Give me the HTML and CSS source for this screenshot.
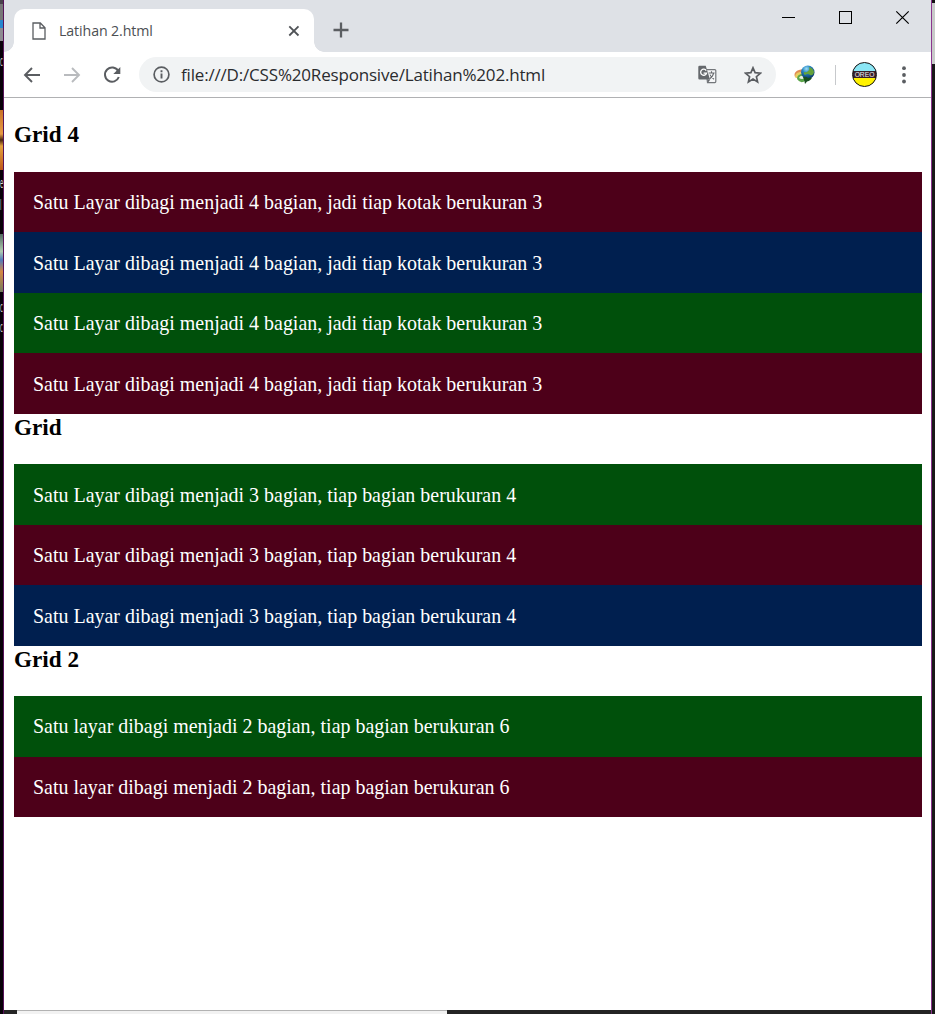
FILE: index.html
```html
<!DOCTYPE html>
<html lang="id">
<head>
<meta charset="utf-8">
<title>Latihan 2.html</title>
<link rel="stylesheet" href="styles.css">
</head>
<body>
<div class="desktop">
  <div class="edge edge-left">
    <i class="d1"></i><span class="t1">c</span><i class="d3"></i><span class="t2">e</span><span class="t3">l</span><i class="d4"></i><span class="t4">c</span><span class="t5">c</span>
  </div>
  <div class="window">
    <header class="tabstrip">
      <div class="tab">
        <svg class="file" width="14" height="18" viewBox="0 0 14 18"><path d="M1 1h7.3L13 5.8V17H1zM8 1v5h5" fill="none" stroke="#5a5d61" stroke-width="1.3"/></svg>
        <span class="tab-title">Latihan 2.html</span>
        <svg width="12" height="12" viewBox="0 0 12 12"><path d="M1.3 1.3l9.2 9.2M10.5 1.3l-9.2 9.2" stroke="#505357" stroke-width="1.8"/></svg>
      </div>
      <svg class="plus" width="16" height="16" viewBox="0 0 16 16"><path d="M8 .5v15M.5 8h15" stroke="#5b5e62" stroke-width="2.3"/></svg>
      <svg class="controls" width="130" height="15" viewBox="0 0 130 15"><path d="M0 7.5h13M57.5 1.5h12v12h-12z" fill="none" stroke="#000" shape-rendering="crispEdges"/><path d="M114.3 1.3l12.4 12.4M126.7 1.3l-12.4 12.4" stroke="#000" stroke-width="1.2"/></svg>
    </header>
    <nav class="toolbar">
      <svg class="back" width="18" height="16" viewBox="0 0 18 16"><path d="M17 8H2M9 1L2 8l7 7" fill="none" stroke="#5a5d61" stroke-width="1.9"/></svg>
      <svg class="forward" width="18" height="16" viewBox="0 0 18 16"><path d="M1 8h15M9 1l7 7-7 7" fill="none" stroke="#b9bbbe" stroke-width="1.9"/></svg>
      <svg class="reload" width="18" height="18" viewBox="0 0 18 18"><path d="M15.2 5A7.1 7.1 0 1 0 15.8 11" fill="none" stroke="#5a5d61" stroke-width="2"/><path d="M17.3 1v7h-7z" fill="#5a5d61"/></svg>
      <div class="omnibox">
        <svg class="info" width="17" height="17" viewBox="0 0 17 17"><circle cx="8.5" cy="8.5" r="7.4" fill="none" stroke="#5a5d61" stroke-width="1.7"/><path d="M8.5 7.4v5M8.5 4.3v1.9" stroke="#5a5d61" stroke-width="1.9"/></svg>
        <span class="url">file:///D:/CSS%20Responsive/Latihan%202.html</span>
        <svg class="translate" width="19" height="19" viewBox="0 0 19 19"><path d="M8 4.6h8.8a1 1 0 0 1 1 1v11a1 1 0 0 1-1 1H9.5z" fill="#f6f7f8" stroke="#73767a" stroke-width="1.2"/><path d="M1.5.7h6.2L12 14.6H1.5A1.3 1.3 0 0 1 .3 13.3V2A1.3 1.3 0 0 1 1.5.7z" fill="#65686c"/><path d="M8.2 5.6A3 3 0 1 0 8.5 8.2H5.6" fill="none" stroke="#fff" stroke-width="1.3"/><path d="M9.5 14.6l.8 3 2-3z" fill="#65686c"/><path d="M10.6 8h6M13.5 6.3V8M15.6 8c-.4 2.6-2 4.5-4 5.8M12 9.6c.8 2 2.2 3.4 4 4.6" fill="none" stroke="#65686c" stroke-width="1.1"/></svg>
        <svg class="star" width="18" height="18" viewBox="0 0 18 18"><path d="M9 1.8l2.1 4.9 5.3.5-4 3.5 1.2 5.2L9 13.1l-4.6 2.8 1.2-5.2-4-3.5 5.3-.5z" fill="none" stroke="#5a5d61" stroke-width="1.7"/></svg>
      </div>
      <svg class="idm" width="21" height="20" viewBox="0 0 21 20">
        <defs><radialGradient id="globe" cx=".4" cy=".25" r=".75"><stop offset="0" stop-color="#9ee0f8"/><stop offset=".4" stop-color="#2786c3"/><stop offset="1" stop-color="#0b3769"/></radialGradient></defs>
        <path d="M1 12Q-1 7 5 5q5-2 9 1l-2 3Q6 6 3 11z" fill="#e08a52"/><path d="M1.5 13Q0 8 6 7q4-1 7 1l-2 2Q6 8 4 13z" fill="#e7ce62"/><path d="M3 14q0-5 6-5l3 6q-5 5-9-1z" fill="#5ba64a"/><path d="M5 13q1-3 5-2l1 2q-3 2-6 0z" fill="#e9f0e4"/>
        <circle cx="13.8" cy="7.2" r="6.7" fill="url(#globe)"/><path d="M15 2q4 1 5 5-1 4-4 3-2-2-5 0-2-1-1-3 3 1 4-1 2-1 1-4z" fill="#65a33b"/><path d="M9 12q3-1 5 1l4-.5q-1 3-5 4l-2 2.5-.6-3z" fill="#194f20"/>
      </svg>
      <span class="divider"></span>
      <div class="avatar"><span>OREO</span></div>
      <svg class="menu" width="4" height="18" viewBox="0 0 4 18"><circle cx="2" cy="2.2" r="1.9"/><circle cx="2" cy="9" r="1.9"/><circle cx="2" cy="15.5" r="1.9"/></svg>
    </nav>
    <main class="page">
      <h3 class="first">Grid 4</h3>
      <div class="box red">Satu Layar dibagi menjadi 4 bagian, jadi tiap kotak berukuran 3</div>
      <div class="box blue">Satu Layar dibagi menjadi 4 bagian, jadi tiap kotak berukuran 3</div>
      <div class="box green">Satu Layar dibagi menjadi 4 bagian, jadi tiap kotak berukuran 3</div>
      <div class="box red">Satu Layar dibagi menjadi 4 bagian, jadi tiap kotak berukuran 3</div>
      <h3>Grid</h3>
      <div class="box green">Satu Layar dibagi menjadi 3 bagian, tiap bagian berukuran 4</div>
      <div class="box red">Satu Layar dibagi menjadi 3 bagian, tiap bagian berukuran 4</div>
      <div class="box blue">Satu Layar dibagi menjadi 3 bagian, tiap bagian berukuran 4</div>
      <h3>Grid 2</h3>
      <div class="box green">Satu layar dibagi menjadi 2 bagian, tiap bagian berukuran 6</div>
      <div class="box red">Satu layar dibagi menjadi 2 bagian, tiap bagian berukuran 6</div>
    </main>
    <footer class="bottom"><span></span></footer>
  </div>
  <div class="edge edge-right"></div>
</div>
</body>
</html>
```

FILE: styles.css
```css
* { box-sizing: border-box; }
body { margin: 0; overflow: hidden; }
svg { display: block; flex: none; }
.desktop { display: grid; grid-template-columns: 4px 927px 4px; width: 935px; height: 1014px; }
.edge { position: relative; background: #080109; }
.edge-left { border-right: 1px solid #571259; }
.edge-right { border-left: 1px solid #8b358e; background: linear-gradient(#111 0 3px, #c8cbc9 3px 64px, #181918 64px); }
.edge i, .edge span { position: absolute; left: 0; }
.edge span { color: #ddd; font: 14px/16px "Open Sans", sans-serif; transform: scaleX(.4); transform-origin: 0 0; }
.d1 { top: 0; width: 3px; height: 41px; background: linear-gradient(#49434b 0 4px, #777 4px 20px, #2586ce 20px 28px, #8d8b91 28px); }
.t1 { top: 53px; }
.d3 { top: 110px; width: 3px; height: 60px; background: linear-gradient(#c97328, #e79a43 40%, #4b250d 50%, #e5a23c 60%, #bf5719); }
.t2 { top: 175px; }
.t3 { top: 197px; }
.d4 { top: 234px; width: 3px; height: 58px; background: linear-gradient(#536a62, #afcbb0 30%, #537cba 45%, #d48743 65%, #737c5f); }
.t4 { top: 299px; }
.t5 { top: 319px; }
.window { display: flex; flex-direction: column; background: #fff; min-width: 0; }
.tabstrip { display: flex; flex: none; height: 52px; padding-left: 10px; background: #dee1e6; }
.tab { position: relative; display: flex; align-items: center; width: 300px; height: 43px; margin-top: 9px; padding: 0 14px 0 18px; border-radius: 10px 10px 0 0; background: #fff; }
.tab::before, .tab::after { content: ""; position: absolute; bottom: 0; width: 10px; height: 10px; }
.tab::before { left: -10px; background: radial-gradient(circle at 0 0, transparent 9.5px, #fff 10px); }
.tab::after { right: -10px; background: radial-gradient(circle at 100% 0, transparent 9.5px, #fff 10px); }
.tab-title { flex: 1; margin-left: 13px; font: 14.2px/20px "Open Sans", sans-serif; letter-spacing: -.1px; color: #4c4f53; white-space: nowrap; }
.plus { margin: 22px 0 0 19px; }
.controls { margin: 10px 19px 0 auto; }
.toolbar { display: flex; flex: none; align-items: center; height: 46px; padding-left: 19px; border-bottom: 1px solid #b0b1b3; }
.forward { margin-left: 22px; }
.reload { margin-left: 22px; }
.omnibox { display: flex; align-items: center; width: 637px; height: 35px; margin-left: 18px; padding: 0 14px; border-radius: 18px; background: #f1f3f4; }
.url { flex: 1; margin-left: 11px; font: 17px/24px "Open Sans", sans-serif; letter-spacing: -.18px; color: #2a2b2e; white-space: nowrap; }
.star { margin-left: 27px; }
.idm { margin-left: 18px; }
.divider { width: 1px; height: 20px; margin-left: 20px; background: #c7c9cc; }
.avatar { display: flex; align-items: center; justify-content: center; width: 25px; height: 25px; margin-left: 16px; border: 1.5px solid #111; border-radius: 50%; background: linear-gradient(#8be6f5 0 8px, #38202a 8px 15px, #fff200 15px); }
.avatar span { font: 6.7px/7px "Liberation Sans", sans-serif; color: #eee; }
.menu { margin-left: 25px; fill: #5a5d61; }
.page { flex: 1; padding: 0 9px 0 10px; font: 19.97px/28px "Liberation Serif", serif; color: #000; }
h3 { height: 50.3px; margin: 0; font-size: 23.2px; line-height: 27px; }
.first { height: 73.95px; padding-top: 23px; }
.box { height: 60.5px; padding: 16.4px 19px 0; color: #fff; white-space: nowrap; }
.red { background: #4d0019; }
.blue { background: #001f4f; }
.green { background: #00500b; }
.bottom { flex: none; height: 4px; padding-left: 13px; background: #242424; }
.bottom span { display: block; width: 430px; height: 4px; border-top: 1px solid #b2b2b2; background: #f2f2f2; }
```
